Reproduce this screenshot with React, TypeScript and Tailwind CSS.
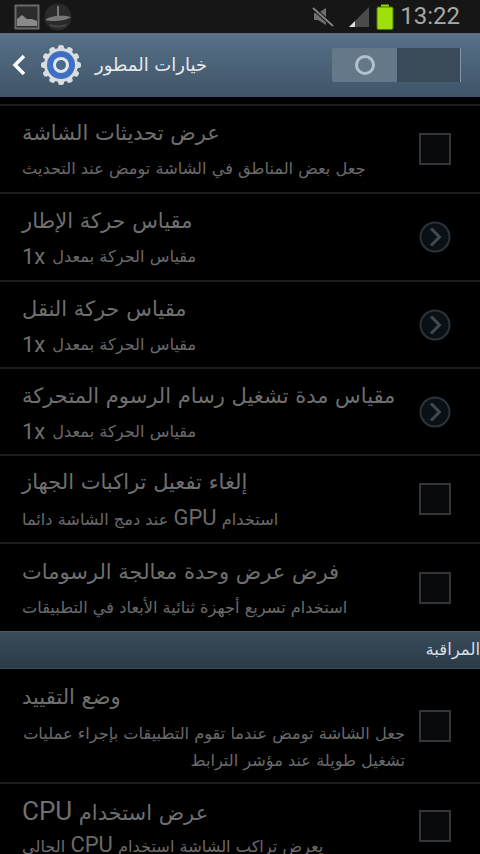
import React from 'react';

const FONT = "font-['DejaVu_Sans','Noto_Sans',sans-serif]";

const Lat = ({ t, c }: { t: string; c: string }) => <span dir="ltr" className={`${c} font-['Roboto',sans-serif]`}>{t}</span>;

const rows = [
  { title: 'عرض تحديثات الشاشة', sub: <>جعل بعض المناطق في الشاشة تومض عند التحديث</>, kind: 'check', h: 'h-[88px]' },
  { title: 'مقياس حركة الإطار', sub: <>مقياس الحركة بمعدل</>, x: true, kind: 'arrow', h: 'h-[88px]' },
  { title: 'مقياس حركة النقل', sub: <>مقياس الحركة بمعدل</>, x: true, kind: 'arrow', h: 'h-[87px]' },
  { title: 'مقياس مدة تشغيل رسام الرسوم المتحركة', sub: <>مقياس الحركة بمعدل</>, x: true, kind: 'arrow', h: 'h-[87px]' },
  { title: 'إلغاء تفعيل تراكبات الجهاز', sub: <>استخدام <Lat t="GPU" c="text-[22px]" /> عند دمج الشاشة دائما</>, kind: 'check', h: 'h-[88px]' },
  { title: 'فرض عرض وحدة معالجة الرسومات', sub: <>استخدام تسريع أجهزة ثنائية الأبعاد في التطبيقات</>, kind: 'check', h: 'h-[87px]', last: true },
];

const CheckBox = () => <div className="w-[32px] h-[32px] border-2 border-[#333538] bg-[#08090a] shrink-0" />;

const ArrowCircle = () => (
  <svg width="32" height="32" viewBox="0 0 32 32" className="shrink-0">
    <circle cx="16" cy="16" r="14.5" fill="#0b1014" stroke="#2b343b" strokeWidth="2" />
    <path d="M12 7.5 L20.5 16 L12 24.5" fill="none" stroke="#3f4a52" strokeWidth="3" />
  </svg>
);

const Row = ({ title, sub, x, kind, h, last }: { title: string; sub: React.ReactNode; x?: boolean; kind: string; h: string; last?: boolean }) => (
  <div className={`${h} flex items-center pl-[22px] pr-[29px] ${last ? '' : 'border-b-2 border-[#1c1c1c]'}`}>
    <div className="flex-1 min-w-0 flex flex-col items-start pt-[2px]">
      <div dir="rtl" className="text-[21px] leading-[30px] text-[#6f6f6f]">{title}</div>
      <div className="flex items-center gap-[7px] mt-[8px]">
        {x && <span className="text-[22px] leading-[26px] text-[#6f6f6f] font-['Roboto',sans-serif]">1x</span>}
        <div dir="rtl" className="text-[16.2px] leading-[26px] text-[#6a6a6a]">{sub}</div>
      </div>
    </div>
    {kind === 'check' ? <CheckBox /> : <ArrowCircle />}
  </div>
);

export default function App() {
  return (
    <div className={`${FONT} w-[480px] h-[854px] overflow-hidden bg-black`}>
      {/* status bar */}
      <div className="h-[33px] bg-[#161616] flex items-center pl-[14px] pr-[20px]">
        <svg width="26" height="26" viewBox="0 0 26 26">
          <rect x="1.5" y="1.5" width="23" height="23" fill="#2c2c2c" stroke="#6a6a6a" strokeWidth="2" />
          <path d="M3 22 V15 L8 11 L13 15 L18 15 L23 17 V22 Z" fill="#8a8a8a" />
        </svg>
        <svg width="28" height="28" viewBox="0 0 28 28" className="ml-[4px]">
          <circle cx="14" cy="14" r="13.5" fill="#2a2a2a" />
          <path d="M1 17 C7 12 20 12 27 14 C22 18 8 19 1 17 Z M13 3 H15 V14 H13 Z" fill="#777777" />
          <path d="M6 22 C11 24 17 24 22 22" stroke="#444444" strokeWidth="2" fill="none" />
        </svg>
        <div className="flex-1" />
        <svg width="22" height="20" viewBox="0 0 22 20">
          <path d="M2 6 H6 L14 1 V18 L6 13 H2 Z" fill="#6e6e6e" />
          <path d="M1 1 L21 19" stroke="#161616" strokeWidth="4" />
          <path d="M1 1 L21 19" stroke="#808080" strokeWidth="2" />
        </svg>
        <svg width="22" height="24" viewBox="0 0 22 24" className="ml-[14px]">
          <path d="M21 2 V22 H1 Z" fill="#4a4a4a" />
          <path d="M7 16 V22 H1 Z" fill="#dcdcdc" />
        </svg>
        <svg width="18" height="26" viewBox="0 0 18 26" className="ml-[6px]">
          <rect x="5" y="0.5" width="8" height="4" fill="#8fd400" />
          <rect x="1" y="3" width="16" height="22.5" rx="1.5" fill="#9edf0c" stroke="#4f7a00" strokeWidth="1" />
        </svg>
        <span className="ml-[6px] text-[24px] leading-[33px] text-[#a8a8a8] font-['Roboto',sans-serif]">13:22</span>
      </div>

      {/* action bar */}
      <div className="h-[64px] bg-gradient-to-b from-[#577188] to-[#3f5468] flex items-center pl-[11px] pr-[19px]">
        <svg width="16" height="24" viewBox="0 0 16 24">
          <path d="M13 3 L4 12 L13 21" fill="none" stroke="#ffffff" strokeWidth="3.5" />
        </svg>
        <svg width="42" height="42" viewBox="0 0 42 42" className="ml-[13px]">
          <g fill="#d8dde2">
            <circle cx="21" cy="21" r="17" />
            {[0, 30, 60, 90, 120, 150].map(a => (
              <rect key={a} x="18" y="1" width="6" height="40" rx="2.5" transform={`rotate(${a} 21 21)`} />
            ))}
          </g>
          <circle cx="21" cy="21" r="14" fill="#3f6fc0" />
          <circle cx="21" cy="21" r="8" fill="#dfe6ee" />
          <circle cx="21" cy="21" r="5" fill="#4a6a8c" />
        </svg>
        <div dir="rtl" className="ml-[13px] text-[18px] leading-[24px] text-[#e6eaee] whitespace-nowrap">خيارات المطور</div>
        <div className="flex-1" />
        <div className="w-[129px] h-[34px] flex">
          <div className="w-[65px] bg-[#64788a] flex items-center justify-center rounded-l-[2px]">
            <div className="w-[20px] h-[20px] rounded-full border-[3px] border-[#b4c2ce]" />
          </div>
          <div className="flex-1 bg-[#3a4a58] border-r border-[#8296a8]" />
        </div>
      </div>

      <div className="h-[9px] bg-black border-b-2 border-[#1c1c1c]" />

      {rows.map(r => <Row key={r.title} {...r} />)}

      {/* section header */}
      <div dir="rtl" className="h-[38px] bg-gradient-to-b from-[#3a4c5a] to-[#2a3b48] border-t border-[#4a5a68] border-b border-b-[#3f4b55] flex items-center text-[16.5px] text-[#d8dde0]">المراقبة</div>

      <div className="h-[115px] flex items-center pl-[22px] pr-[29px] border-b-2 border-[#1c1c1c]">
        <div className="flex-1 min-w-0 flex flex-col items-start pt-[4px]">
          <div dir="rtl" className="text-[21px] leading-[30px] text-[#6f6f6f]">وضع التقييد</div>
          <div dir="rtl" className="mt-[8px] pr-[14px] w-full text-[16.2px] leading-[27px] text-[#6a6a6a]">جعل الشاشة تومض عندما تقوم التطبيقات بإجراء عمليات تشغيل طويلة عند مؤشر الترابط</div>
        </div>
        <CheckBox />
      </div>

      <div className="flex pl-[22px] pr-[29px] pt-[12px]">
        <div className="flex-1 min-w-0 flex flex-col items-start">
          <div dir="rtl" className="text-[21px] leading-[30px] text-[#6f6f6f]">عرض استخدام <Lat t="CPU" c="text-[26px]" /></div>
          <div dir="rtl" className="mt-[4px] text-[16.2px] leading-[26px] text-[#6a6a6a]">يعرض تراكب الشاشة استخدام <Lat t="CPU" c="text-[22px]" /> الحالي</div>
        </div>
        <div className="mt-[14px]"><CheckBox /></div>
      </div>
    </div>
  );
}
